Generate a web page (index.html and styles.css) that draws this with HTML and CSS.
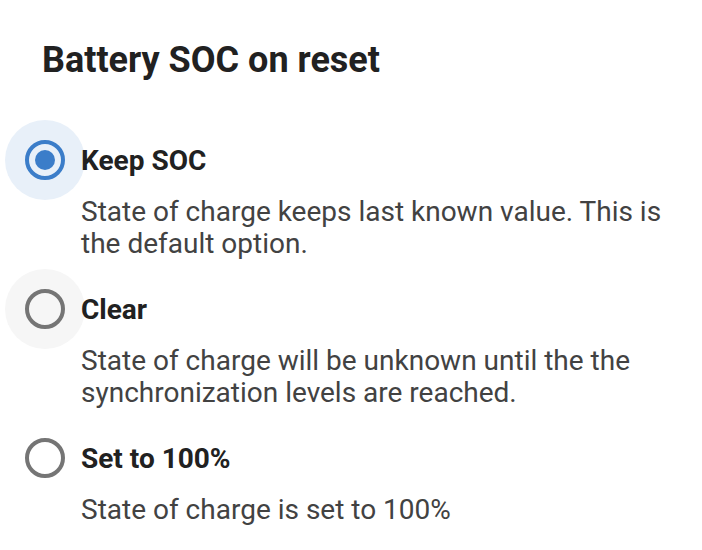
FILE: index.html
```html
<!DOCTYPE html>
<html lang="en">
<head>
  <meta charset="UTF-8">
  <meta name="viewport" content="width=device-width, initial-scale=1.0">
  <title>Battery SOC on reset</title>
  <link rel="stylesheet" href="styles.css">
</head>
<body>

<div id="soc-dialog">
  <h2 class="title">Battery SOC on reset</h2>

  <div class="options">
    <div class="option">
      <div class="option-row">
        <span class="radio checked focused"></span>
        <span class="label">Keep SOC</span>
      </div>
      <p class="desc">State of charge keeps last known value. This is the default option.</p>
    </div>

    <div class="option">
      <div class="option-row">
        <span class="radio hovered"></span>
        <span class="label">Clear</span>
      </div>
      <p class="desc">State of charge will be unknown until the the synchronization levels are reached.</p>
    </div>

    <div class="option">
      <div class="option-row">
        <span class="radio"></span>
        <span class="label">Set to 100%</span>
      </div>
      <p class="desc">State of charge is set to 100%</p>
    </div>
  </div>
</div>

</body>
</html>
```

FILE: styles.css
```css
body {
  font-family: Roboto, "Noto Sans", Arial, sans-serif;
  margin: 0;
  background: #fff;
  color: #212121;
}

#soc-dialog {
  padding: 40px 0 0 42px;
  width: 640px;
}

.title {
  font-size: 36px;
  font-weight: 700;
  line-height: 40px;
  margin: 0 0 56px 0;
}

.option {
  margin-bottom: 25px;
}

.option-row {
  display: flex;
  align-items: center;
  height: 48px;
  margin-left: -17px;
}

.radio {
  position: relative;
  width: 40px;
  height: 40px;
  box-sizing: border-box;
  border: 4px solid #757575;
  border-radius: 50%;
  flex-shrink: 0;
}

.radio::before {
  content: "";
  position: absolute;
  left: -24px;
  top: -24px;
  width: 80px;
  height: 80px;
  border-radius: 50%;
  z-index: -1;
}

.radio.focused::before {
  background: #e8f0f9;
}

.radio.hovered::before {
  background: #f6f6f6;
}

.radio.checked {
  border-color: #3b7dc9;
}

.radio.checked::after {
  content: "";
  position: absolute;
  left: 6px;
  top: 6px;
  width: 20px;
  height: 20px;
  border-radius: 50%;
  background: #3b7dc9;
}

.label {
  margin-left: 16px;
  font-size: 28px;
  font-weight: 700;
}

.desc {
  margin: 12px 0 0 39px;
  max-width: 600px;
  font-size: 28px;
  line-height: 32px;
  color: #424242;
}
```
